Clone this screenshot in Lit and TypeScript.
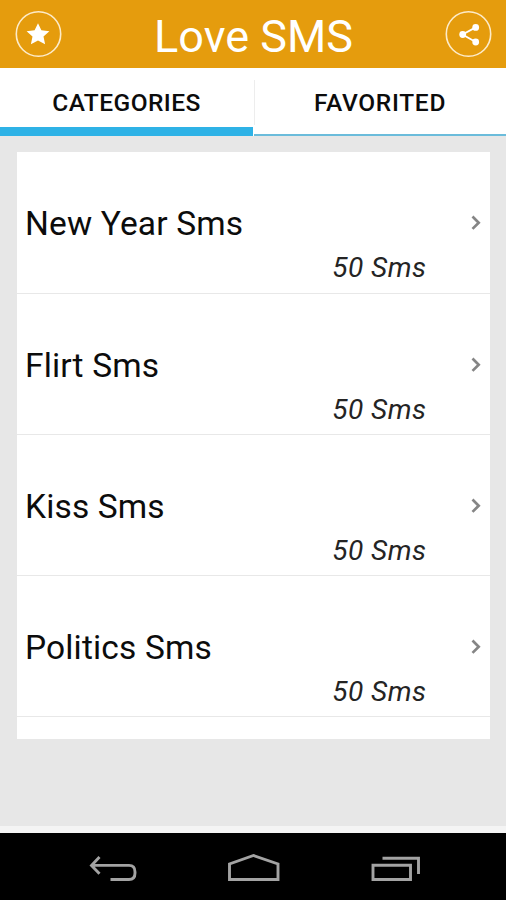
import { LitElement, html, css } from "lit";
import { customElement } from "lit/decorators.js";

@customElement("app-root")
export class AppRoot extends LitElement {
  static styles = css`
    :host {
      display: flex;
      flex-direction: column;
      height: 900px;
      overflow: hidden;
      background: #e7e7e7;
      color: #0c0c0c;
      font-family: Roboto, sans-serif;
    }
    svg {
      display: block;
      fill: none;
    }
    .bar {
      flex: none;
      height: 67.5px;
      display: flex;
      align-items: center;
      justify-content: space-between;
      padding: 0 14px 0 15px;
      background: #e59c0d;
      box-sizing: border-box;
    }
    .bar h1 {
      margin: 6px 0 0;
      font-size: 45px;
      font-weight: 400;
      line-height: 54px;
      color: #fff;
    }
    .tabs {
      flex: none;
      display: grid;
      grid-template-columns: 253px 253px;
      height: 68.5px;
      background: #fff;
    }
    .tab {
      box-sizing: border-box;
      display: flex;
      align-items: center;
      justify-content: center;
      font-size: 24.5px;
      font-weight: 500;
      letter-spacing: 0.45px;
    }
    .active {
      border-bottom: 9px solid #2eb2e6;
      padding-top: 10px;
    }
    .idle {
      border-bottom: 2px solid #6bbcdb;
      padding-top: 3px;
      margin-left: 1px;
      letter-spacing: 0.7px;
      background: linear-gradient(#ededed, #ededed) 0 12px / 1px 45px no-repeat;
    }
    .card {
      flex: none;
      box-sizing: border-box;
      height: 587px;
      margin: 16px 16px 0 17px;
      background: #fff;
      overflow: hidden;
    }
    .row {
      box-sizing: border-box;
      height: 141.3px;
      padding: 51px 9px 0 8px;
      border-bottom: 1.5px solid #e8e8e8;
    }
    .row:first-child {
      height: 141.6px;
    }
    .line {
      display: flex;
      align-items: center;
      justify-content: space-between;
    }
    .line svg {
      margin-bottom: 2px;
    }
    .name {
      font-size: 33.5px;
      line-height: 42px;
      letter-spacing: 0.15px;
    }
    .count {
      padding-right: 54.5px;
      text-align: right;
      font-size: 28px;
      line-height: 46px;
      font-style: italic;
      letter-spacing: 0.5px;
      color: #242424;
    }
    .fade {
      flex: 1;
      background: linear-gradient(#f4f4f4, #f4f4f4) bottom / 100% 7px no-repeat;
    }
    .nav {
      flex: none;
      height: 67px;
      background: #000;
    }
  `;

  private categories = [
    { name: "New Year Sms", count: 50 },
    { name: "Flirt Sms", count: 50 },
    { name: "Kiss Sms", count: 50 },
    { name: "Politics Sms", count: 50 },
  ];

  render() {
    return html`
      <header class="bar">
        <svg width="47" height="47" viewBox="0 0 47 47">
          <circle cx="23.5" cy="24" r="22.2" stroke="#fdebc8" stroke-width="1.6" />
          <path fill="#fff" d="M23 13.2l3.4 7.1 8 .9-5.9 5.3 1.6 7.8-7.1-3.9-7.1 3.9 1.6-7.8-5.9-5.3 8-.9z" />
        </svg>
        <h1>Love SMS</h1>
        <svg width="47" height="47" viewBox="0 0 47 47">
          <circle cx="23.5" cy="24" r="22.2" stroke="#fdebc8" stroke-width="1.6" />
          <path d="M30.7 17.4L17.5 24.5l13.2 7.5" stroke="#fff" stroke-width="1.8" />
          <g fill="#fff">
            <circle cx="30.7" cy="17.4" r="3.4" />
            <circle cx="17.7" cy="24.5" r="3.4" />
            <circle cx="30.7" cy="32" r="3.4" />
          </g>
        </svg>
      </header>
      <nav class="tabs">
        <div class="tab active">CATEGORIES</div>
        <div class="tab idle">FAVORITED</div>
      </nav>
      <main class="card">
        ${this.categories.map(
          (c) => html`
            <div class="row">
              <div class="line">
                <span class="name">${c.name}</span>
                <svg width="10" height="16" viewBox="0 0 10 16">
                  <path d="M1.5 1.5l6.2 6.2-6.2 6.2" stroke="#858585" stroke-width="2.7" />
                </svg>
              </div>
              <div class="count">${c.count} Sms</div>
            </div>
          `
        )}
      </main>
      <div class="fade"></div>
      <footer class="nav">
        <svg width="506" height="67" viewBox="0 833 506 67" stroke="#a3a3a3" stroke-width="2.9">
          <path d="M99.5 857l-8 8.4 8 8.4M92 865.4h37q6 0 6 6.5v1q0 6.6-6 6.6h-18.5" />
          <path d="M229.5 879.5v-15.5l24-8.5 24.500 8.5v15.5z" />
          <path d="M373 865.2h37.5v14.3h-37.5zM382.5 858.3h36v15.7" />
        </svg>
      </footer>
    `;
  }
}
